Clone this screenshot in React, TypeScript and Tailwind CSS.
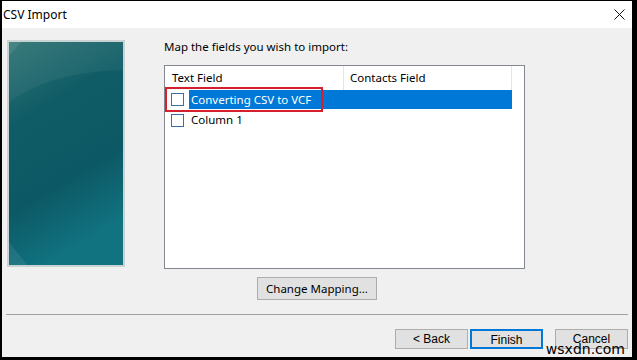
import React from "react";

const font = { fontFamily: '"Noto Sans", "Segoe UI", sans-serif' };

function Checkbox() {
  return <span className="block h-[13px] w-[13px] shrink-0 border border-[#3b6ea8] bg-white" />;
}

function ArtPanel() {
  return (
    <div className="h-[227px] w-[118px] shrink-0 border-2 border-[#c9d3d4] bg-[#0d5a63]">
      <svg width="114" height="223" viewBox="0 0 114 223" className="block">
        <defs>
          <linearGradient id="bg" x1="0" y1="0" x2="0.3" y2="1">
            <stop offset="0" stopColor="#2f7474" />
            <stop offset="0.35" stopColor="#105c66" />
            <stop offset="0.7" stopColor="#0c5864" />
            <stop offset="1" stopColor="#117280" />
          </linearGradient>
        </defs>
        <rect width="114" height="223" fill="url(#bg)" />
        <path d="M0 60 Q40 30 114 28 L114 0 L0 0 Z" fill="#ffffff" opacity="0.05" />
        <path d="M0 200 L18 223 L0 223 Z" fill="#ffffff" opacity="0.08" />
        <path d="M0 0 L12 0 L0 14 Z" fill="#ffffff" opacity="0.08" />
      </svg>
    </div>
  );
}

function DlgButton({ label, primary, className = "" }: { label: string; primary?: boolean; className?: string }) {
  return (
    <button
      type="button"
      className={`h-[20px] w-[73px] bg-[#e1e1e1] text-[12px] text-black ${
        primary ? "border-2 border-[#0078d7]" : "border border-[#adadad]"
      } ${className}`}
      style={{ fontFamily: '"Liberation Sans", Arial, sans-serif' }}
    >
      {label}
    </button>
  );
}

export default function App() {
  return (
    <div className="h-[360px] w-[637px] bg-black pb-[3px] pl-[2px] pr-[5px] pt-[1px]" style={font}>
      <div className="relative flex h-full flex-col">
        <div className="flex h-[27px] shrink-0 items-center justify-between bg-white pl-[1px] pr-[4px] text-[12px] text-black">
          <span>CSV Import</span>
          <svg width="11" height="11" viewBox="0 0 11 11" className="mr-[3px]">
            <path d="M0.5 0.5 L10.5 10.5 M10.5 0.5 L0.5 10.5" stroke="#111" strokeWidth="1" />
          </svg>
        </div>

        <div className="flex flex-1 flex-col bg-[#f0f0f0]">
          <div className="flex pl-[5px] pt-[12px]">
            <ArtPanel />
            <div className="ml-[39px] flex flex-col">
              <div className="h-[25px] text-[11.5px] leading-[14px] text-black">Map the fields you wish to import:</div>
              <div className="h-[204px] w-[361px] border border-[#828790] bg-white text-[11.5px] text-black">
                <div className="flex h-[24px] w-[347px] items-center">
                  <div className="flex h-full w-[179px] items-center border-r border-[#e5e5e5] pl-[7px]">Text Field</div>
                  <div className="flex h-full flex-1 items-center border-r border-[#e5e5e5] pl-[6px]">Contacts Field</div>
                </div>
                <div className="relative flex h-[19px] w-[347px] items-center pl-[6px]">
                  <Checkbox />
                  <div className="ml-[5px] flex h-full flex-1 items-center bg-[#0078d7] pl-[2px] text-white">
                    Converting CSV to VCF
                  </div>
                  <div className="pointer-events-none absolute left-[0px] top-[-3px] h-[25px] w-[158px] border-2 border-[#d4202c]" />
                </div>
                <div className="mt-[3px] flex h-[16px] items-center pl-[6px]">
                  <Checkbox />
                  <span className="ml-[7px]">Column 1</span>
                </div>
              </div>
              <button
                type="button"
                className="ml-[93px] mt-[8px] h-[23px] w-[120px] border border-[#adadad] bg-[#e1e1e1] text-[11.5px] text-black"
              >
                Change Mapping...
              </button>
            </div>
          </div>

          <div className="ml-[4px] mr-[4px] mt-[14px] h-[2px] border-t border-[#a0a0a0] border-b-white" />

          <div className="mt-[13px] flex justify-end pr-[4px]">
            <DlgButton label="< Back" />
            <DlgButton label="Finish" primary className="ml-[2px]" />
            <DlgButton label="Cancel" className="ml-[12px]" />
          </div>
        </div>

        <span
          className="absolute bottom-[0px] right-[7px] text-[14px] leading-[15px] text-black"
          style={{ fontFamily: '"DejaVu Sans", sans-serif' }}
        >
          wsxdn.com
        </span>
      </div>
    </div>
  );
}
